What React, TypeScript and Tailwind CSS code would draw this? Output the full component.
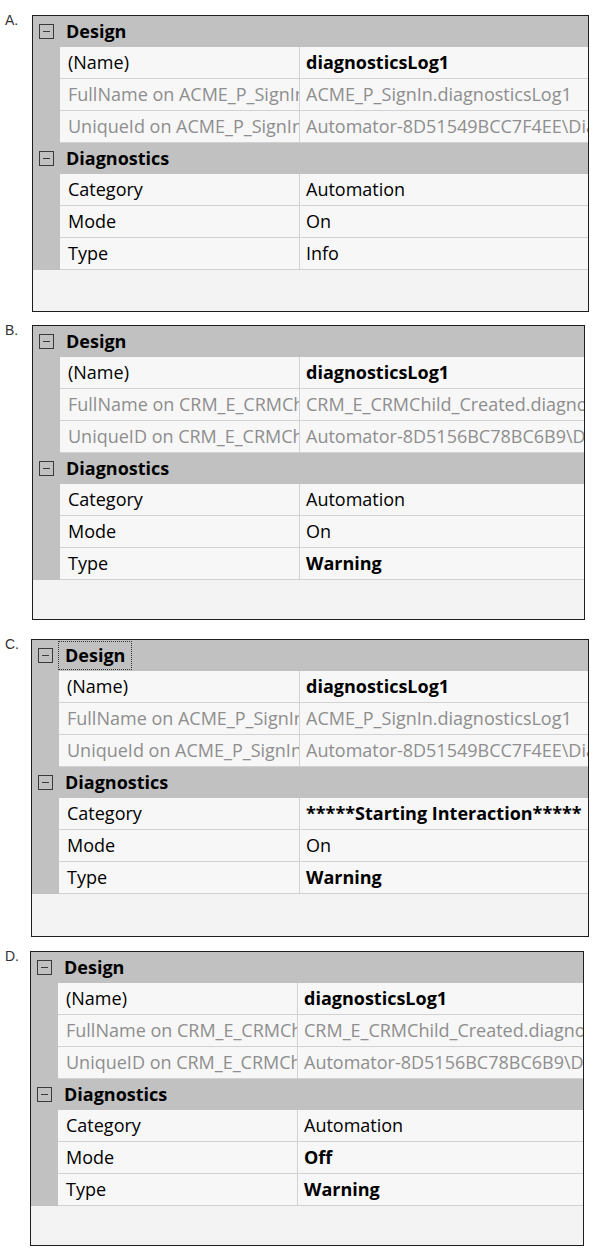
import React from 'react';

type Cell = { text: string; bold?: boolean };

interface Panel {
  letter: string;
  wrap: string; // outer row classes (top margin, left offset)
  box: string; // box size classes
  labelCol: string; // width of the label column
  fullLabel: string;
  fullValue: string;
  uidLabel: string;
  uidValue: string;
  category: Cell;
  mode: Cell;
  type: Cell;
  focused?: boolean;
}

const panels: Panel[] = [
  {
    letter: 'A.',
    wrap: 'mt-[15px] pl-[5px]',
    box: 'ml-[27px] w-[557px] h-[297px]',
    labelCol: 'w-[240px]',
    fullLabel: 'FullName on ACME_P_SignIn',
    fullValue: 'ACME_P_SignIn.diagnosticsLog1',
    uidLabel: 'UniqueId on ACME_P_SignIn',
    uidValue: 'Automator-8D51549BCC7F4EE\\Diagnostics',
    category: { text: 'Automation' },
    mode: { text: 'On' },
    type: { text: 'Info' },
  },
  {
    letter: 'B.',
    wrap: 'mt-[13px] pl-[5px]',
    box: 'ml-[27px] w-[553px] h-[295px]',
    labelCol: 'w-[240px]',
    fullLabel: 'FullName on CRM_E_CRMChild_Created',
    fullValue: 'CRM_E_CRMChild_Created.diagnosticsLog1',
    uidLabel: 'UniqueID on CRM_E_CRMChild_Created',
    uidValue: 'Automator-8D5156BC78BC6B9\\Diagnostics',
    category: { text: 'Automation' },
    mode: { text: 'On' },
    type: { text: 'Warning', bold: true },
  },
  {
    letter: 'C.',
    wrap: 'mt-[19px] pl-[5px]',
    box: 'ml-[26px] w-[558px] h-[298px]',
    labelCol: 'w-[241px]',
    fullLabel: 'FullName on ACME_P_SignIn',
    fullValue: 'ACME_P_SignIn.diagnosticsLog1',
    uidLabel: 'UniqueId on ACME_P_SignIn',
    uidValue: 'Automator-8D51549BCC7F4EE\\Diagnostics',
    category: { text: '*****Starting Interaction*****', bold: true },
    mode: { text: 'On' },
    type: { text: 'Warning', bold: true },
    focused: true,
  },
  {
    letter: 'D.',
    wrap: 'mt-[14px] pl-[5px]',
    box: 'ml-[25px] w-[554px] h-[295px]',
    labelCol: 'w-[240px]',
    fullLabel: 'FullName on CRM_E_CRMChild_Created',
    fullValue: 'CRM_E_CRMChild_Created.diagnosticsLog1',
    uidLabel: 'UniqueID on CRM_E_CRMChild_Created',
    uidValue: 'Automator-8D5156BC78BC6B9\\Diagnostics',
    category: { text: 'Automation' },
    mode: { text: 'Off', bold: true },
    type: { text: 'Warning', bold: true },
  },
];

const font = { fontFamily: '"Open Sans", "Noto Sans", sans-serif' };

function Minus() {
  return (
    <div className="w-[15px] h-[15px] border border-[#3a3a3a] flex items-center justify-center">
      <div className="w-[7px] h-px bg-[#3a3a3a]" />
    </div>
  );
}

function Category({ title, focused }: { title: string; focused?: boolean }) {
  return (
    <div className="flex h-[31px] bg-[#c1c1c1] border-b border-[#c1c1c1]">
      <div className="w-[27px] flex-none flex items-center justify-center">
        <Minus />
      </div>
      <div className="flex items-center">
        <span
          className={`px-[6px] h-[27px] flex items-center text-[18px] font-bold text-black ${
            focused ? 'outline outline-1 outline-dotted outline-[#333]' : ''
          }`}
        >
          {title}
        </span>
      </div>
    </div>
  );
}

function Row({ label, value, grey, labelCol }: { label: string; value: Cell; grey?: boolean; labelCol: string }) {
  const color = grey ? 'text-[#8e8e8e]' : 'text-black';
  return (
    <div className="flex h-[32px]">
      <div className="w-[27px] flex-none bg-[#c1c1c1]" />
      <div className="flex flex-1 min-w-0 bg-[#f7f7f7] border-b border-[#d2d2d2]">
        <div className={`${labelCol} flex-none overflow-hidden whitespace-nowrap flex items-center pl-[8px] text-[18px] ${color} border-r border-[#d2d2d2]`}>
          {label}
        </div>
        <div
          className={`flex-1 min-w-0 overflow-hidden whitespace-nowrap flex items-center pl-[6px] text-[18px] ${color} ${
            value.bold ? 'font-bold' : ''
          }`}
        >
          {value.text}
        </div>
      </div>
    </div>
  );
}

function PropertyGrid({ p }: { p: Panel }) {
  return (
    <div className={`flex items-start ${p.wrap}`}>
      <div className="w-[0px] text-[14px] leading-none text-[#333] -mt-[2px] whitespace-nowrap" style={{ fontFamily: '"Liberation Sans", Arial, sans-serif' }}>
        {p.letter}
      </div>
      <div className={`${p.box} flex-none border border-[#1e1e1e] bg-[#f3f3f3] flex flex-col overflow-hidden`}>
        <Category title="Design" focused={p.focused} />
        <Row labelCol={p.labelCol} label="(Name)" value={{ text: 'diagnosticsLog1', bold: true }} />
        <Row labelCol={p.labelCol} label={p.fullLabel} value={{ text: p.fullValue }} grey />
        <Row labelCol={p.labelCol} label={p.uidLabel} value={{ text: p.uidValue }} grey />
        <Category title="Diagnostics" />
        <Row labelCol={p.labelCol} label="Category" value={p.category} />
        <Row labelCol={p.labelCol} label="Mode" value={p.mode} />
        <Row labelCol={p.labelCol} label="Type" value={p.type} />
        <div className="flex-1 bg-[#f3f3f3]" />
      </div>
    </div>
  );
}

export default function App() {
  return (
    <div className="w-[603px] h-[1255px] bg-white flex flex-col" style={font}>
      {panels.map((p) => (
        <PropertyGrid key={p.letter} p={p} />
      ))}
    </div>
  );
}
